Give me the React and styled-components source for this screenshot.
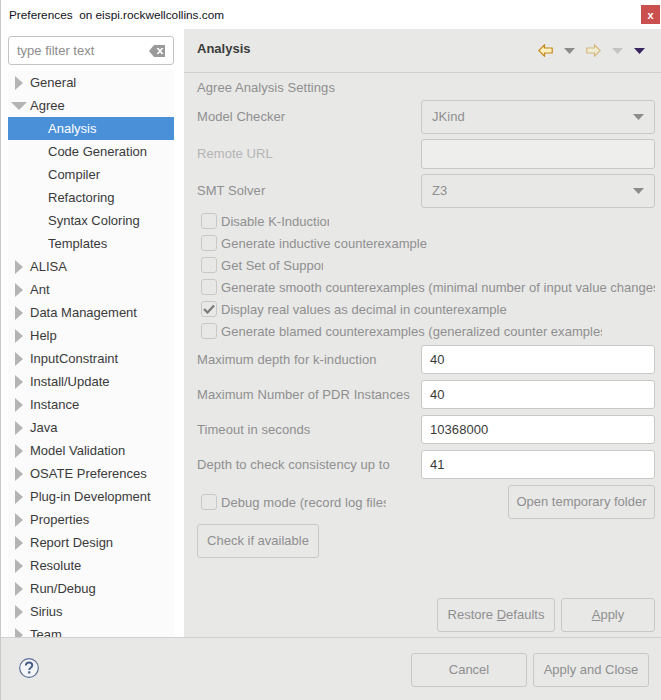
import React from 'react'
import styled, { createGlobalStyle } from 'styled-components'

const Global = createGlobalStyle`
  html, body { margin: 0; padding: 0; background: #fff; }
  * { box-sizing: border-box; }
  body { font-family: "Liberation Sans", Arial, sans-serif; font-size: 13px; }
`

const Window = styled.div`
  width: 661px;
  height: 700px;
  display: flex;
  flex-direction: column;
  overflow: hidden;
  background: #fff;
  border-left: 1px solid #c8c8c8;
`
const TitleBar = styled.div`
  height: 29px;
  flex: none;
  display: flex;
  align-items: center;
  justify-content: space-between;
  padding: 0 0 0 8px;
  font-size: 11.8px;
  color: #101020;
  white-space: pre;
`
const CloseBox = styled.div`
  width: 19px;
  height: 19px;
  margin: 0 1px 0 0;
  background: #c9504f;
  color: #fff;
  font-size: 11px;
  font-weight: bold;
  display: flex;
  align-items: center;
  justify-content: center;
`
const Main = styled.div`
  flex: 1;
  min-height: 0;
  display: flex;
`
const Side = styled.div`
  width: 183px;
  flex: none;
  padding: 7px 10px 0 7px;
  display: flex;
  flex-direction: column;
  background: #fff;
  overflow: hidden;
`
const Filter = styled.div`
  height: 29px;
  flex: none;
  border: 1px solid #c4c4c4;
  border-radius: 3px;
  display: flex;
  align-items: center;
  justify-content: space-between;
  padding: 0 8px 0 8px;
  color: #8c8c8c;
  background: #fff;
`
const Tree = styled.div`
  flex: 1;
  min-height: 0;
  margin-top: 6px;
  background: #fbfbfb;
  overflow: hidden;
`
const TreeRow = styled.div`
  height: 23px;
  display: flex;
  align-items: center;
  padding-left: ${p => (p.$child ? 40 : 22)}px;
  position: relative;
  color: ${p => (p.$selected ? '#fff' : '#3a3a3a')};
  background: ${p => (p.$selected ? '#4a90d9' : 'transparent')};
`
const Twist = styled.svg`
  position: absolute;
  left: ${p => (p.$open ? 3 : 7)}px;
  top: ${p => (p.$open ? 8 : 5)}px;
`
const Content = styled.div`
  flex: 1;
  min-width: 0;
  background: #e8e8e7;
  display: flex;
  flex-direction: column;
`
const Header = styled.div`
  height: 44px;
  flex: none;
  border-bottom: 1px solid #d0d0ce;
  display: flex;
  align-items: center;
  justify-content: space-between;
  padding: 0 16px 5px 13px;
`
const Title = styled.div`
  font-weight: bold;
  font-size: 13px;
  color: #3c3c3c;
`
const NavIcons = styled.div`
  display: flex;
  align-items: center;
  gap: 11px;
  margin-top: 5px;
`
const Form = styled.div`
  flex: 1;
  min-height: 0;
  padding: 5px 6px 0 13px;
  display: flex;
  flex-direction: column;
  color: #8f8f8f;
  overflow: hidden;
  letter-spacing: 0.06px;
`
const Section = styled.div`
  height: 18px;
  line-height: 18px;
  margin: 1px 0 3px;
`
const FieldRow = styled.div`
  display: flex;
  align-items: center;
  justify-content: space-between;
  height: ${p => p.$h || 35}px;
  margin-bottom: ${p => p.$gap || 0}px;
  color: ${p => (p.$faint ? '#b4b4b4' : 'inherit')};
  white-space: nowrap;
`
const RaisedLabel = styled.span`
  margin-bottom: 2px;
`
const Combo = styled.div`
  width: 234px;
  height: 34px;
  border: 1px solid #c8c8c6;
  border-radius: 3px;
  display: flex;
  align-items: center;
  justify-content: space-between;
  padding: 0 10px 1px 10px;
`
const EmptyField = styled.div`
  width: 234px;
  height: 30px;
  border: 1px solid #c8c8c6;
  border-radius: 3px;
  background: #eeeeed;
`
const Input = styled.div`
  width: 234px;
  height: 29px;
  border: 1px solid #c8c8c6;
  border-radius: 3px;
  background: #fff;
  color: #3a3a3a;
  display: flex;
  align-items: center;
  padding: 0 8px;
`
const Checks = styled.div`
  display: flex;
  flex-direction: column;
  margin: 2px 0 0;
  letter-spacing: 0.02px;
`
const CheckRow = styled.div`
  height: 22px;
  display: flex;
  align-items: center;
  gap: 4px;
  padding-left: 4px;
  white-space: nowrap;
  overflow: hidden;
`
const Box = styled.span`
  width: 16px;
  height: 16px;
  flex: none;
  border: 1px solid #c8c8c6;
  border-radius: 3px;
  display: flex;
  align-items: center;
  justify-content: center;
`
const Clip = styled.span`
  display: block;
  overflow: hidden;
  width: ${p => p.$w}px;
`
const DebugRow = styled.div`
  height: 34px;
  margin-top: 3px;
  display: flex;
  align-items: center;
  justify-content: space-between;
`
const DebugLabel = styled.div`
  display: flex;
  align-items: center;
  gap: 4px;
  padding-left: 4px;
  white-space: nowrap;
`
const Button = styled.div`
  height: 34px;
  width: ${p => p.$w}px;
  flex: none;
  border: 1px solid #c8c8c6;
  border-radius: 3px;
  display: flex;
  align-items: center;
  justify-content: center;
  padding-bottom: 2px;
  color: #8f8f8f;
  white-space: pre;
  letter-spacing: 0;
`
const CheckWrap = styled.div`
  margin-top: 5px;
`
const FormButtons = styled.div`
  display: flex;
  justify-content: flex-end;
  gap: 6px;
  margin-top: auto;
  margin-bottom: 5px;
`
const Footer = styled.div`
  height: 63px;
  flex: none;
  background: #e8e8e7;
  border-top: 1px solid #d0d0ce;
  display: flex;
  align-items: center;
  justify-content: space-between;
  padding: 2px 12px 0 18px;
`
const FooterButtons = styled.div`
  display: flex;
  gap: 6px;
`
const HelpIcon = styled.svg`
  margin-bottom: 4px;
`
const Key = styled.span`
  text-decoration: underline;
`

const Caret = ({ color = '#8c8c8c' }) => (
  <svg width="11" height="6" viewBox="0 0 11 6">
    <path d="M0 0h11L5.500 6z" fill={color} />
  </svg>
)

const BackArrow = () => (
  <svg width="15" height="13" viewBox="0 0 15 13">
    <path d="M6.500.8.800 6.500l5.700 5.700V9h7.700V4H6.500z" fill="#fdf0c0" stroke="#c58a1a" strokeWidth="1.200" />
  </svg>
)

const ForwardArrow = () => (
  <svg width="15" height="13" viewBox="0 0 15 13" style={{ opacity: 0.5 }}>
    <path d="M8.500.8l5.700 5.700-5.700 5.700V9H.8V4h7.700z" fill="#fdf0c0" stroke="#c58a1a" strokeWidth="1.200" />
  </svg>
)

const tree = [
  ['General'],
  ['Agree', 'open'],
  ['Analysis', 'child', 'selected'],
  ['Code Generation', 'child'],
  ['Compiler', 'child'],
  ['Refactoring', 'child'],
  ['Syntax Coloring', 'child'],
  ['Templates', 'child'],
  ['ALISA'],
  ['Ant'],
  ['Data Management'],
  ['Help'],
  ['InputConstraint'],
  ['Install/Update'],
  ['Instance'],
  ['Java'],
  ['Model Validation'],
  ['OSATE Preferences'],
  ['Plug-in Development'],
  ['Properties'],
  ['Report Design'],
  ['Resolute'],
  ['Run/Debug'],
  ['Sirius'],
  ['Team'],
]

const checks = [
  ['Disable K-Induction', 108],
  ['Generate inductive counterexamples', 206],
  ['Get Set of Support', 102],
  ['Generate smooth counterexamples (minimal number of input value changes)', 434],
  ['Display real values as decimal in counterexample', 434, true],
  ['Generate blamed counterexamples (generalized counter examples)', 381],
]

const fields = [
  ['Maximum depth for k-induction', '40'],
  ['Maximum Number of PDR Instances', '40'],
  ['Timeout in seconds', '10368000'],
  ['Depth to check consistency up to', '41'],
]

const App = () => (
  <>
    <Global />
    <Window>
      <TitleBar>
        <span>Preferences  on eispi.rockwellcollins.com</span>
        <CloseBox>x</CloseBox>
      </TitleBar>
      <Main>
        <Side>
          <Filter>
            <span>type filter text</span>
            <svg width="16" height="12" viewBox="0 0 16 12">
              <path fillRule="evenodd" d="M5 0h11v12H5L0 6zM7.500 3l2.500 3-2.500 3h2l1.500-1.800L12.500 9h2L12 6l2.500-3h-2L11 4.800 9.500 3z" fill="#9a9a9a" />
            </svg>
          </Filter>
          <Tree>
            {tree.map(([label, a, b]) => {
              const child = a === 'child'
              const open = a === 'open'
              return (
                <TreeRow key={label} $child={child} $selected={b === 'selected'}>
                  {!child && (
                    <Twist $open={open} width={open ? 16 : 8} height={open ? 8 : 14} viewBox={open ? '0 0 16 8' : '0 0 8 14'}>
                      <path d={open ? 'M0 0h16L8 8z' : 'M0 0l8 7-8 7z'} fill="#b4b4b4" />
                    </Twist>
                  )}
                  {label}
                </TreeRow>
              )
            })}
          </Tree>
        </Side>
        <Content>
          <Header>
            <Title>Analysis</Title>
            <NavIcons>
              <BackArrow />
              <Caret />
              <ForwardArrow />
              <Caret color="#c4c4c4" />
              <Caret color="#3b2560" />
            </NavIcons>
          </Header>
          <Form>
            <Section>Agree Analysis Settings</Section>
            <FieldRow $h={34} $gap={5}>
              <RaisedLabel>Model Checker</RaisedLabel>
              <Combo>JKind<Caret /></Combo>
            </FieldRow>
            <FieldRow $h={30} $gap={5} $faint>
              <RaisedLabel>Remote URL</RaisedLabel>
              <EmptyField />
            </FieldRow>
            <FieldRow $h={34}>
              <RaisedLabel>SMT Solver</RaisedLabel>
              <Combo>Z3<Caret /></Combo>
            </FieldRow>
            <Checks>
              {checks.map(([label, w, on]) => (
                <CheckRow key={label}>
                  <Box>
                    {on && (
                      <svg width="12" height="10" viewBox="0 0 12 10">
                        <path d="M1 5l3.500 3.500L11 1.500" fill="none" stroke="#7a7a7a" strokeWidth="2.200" />
                      </svg>
                    )}
                  </Box>
                  <Clip $w={w}>{label}</Clip>
                </CheckRow>
              ))}
            </Checks>
            {fields.map(([label, value]) => (
              <FieldRow key={label}>
                {label}
                <Input>{value}</Input>
              </FieldRow>
            ))}
            <DebugRow>
              <DebugLabel>
                <Box />
                <Clip $w={165}>Debug mode (record log files)</Clip>
              </DebugLabel>
              <Button $w={147}>Open temporary folder</Button>
            </DebugRow>
            <CheckWrap>
              <Button $w={122}>Check if available</Button>
            </CheckWrap>
            <FormButtons>
              <Button $w={118}><span>Restore <Key>D</Key>efaults</span></Button>
              <Button $w={94}><span><Key>A</Key>pply</span></Button>
            </FormButtons>
          </Form>
        </Content>
      </Main>
      <Footer>
        <HelpIcon width="20" height="20" viewBox="0 0 20 20">
          <circle cx="10" cy="10" r="9.300" fill="#f4f5f8" stroke="#5d7196" strokeWidth="1.200" />
          <path d="M6.800 7.500C7 5.300 8.500 4.500 10 4.500c2 0 3.300 1.200 3.300 2.800 0 2.400-3.100 2.500-3.100 4.700" fill="none" stroke="#4a5f88" strokeWidth="2" />
          <rect x="9.100" y="13.300" width="2.200" height="2.200" fill="#4a5f88" />
        </HelpIcon>
        <FooterButtons>
          <Button $w={116}>Cancel</Button>
          <Button $w={116}>Apply and Close</Button>
        </FooterButtons>
      </Footer>
    </Window>
  </>
)

export default App
